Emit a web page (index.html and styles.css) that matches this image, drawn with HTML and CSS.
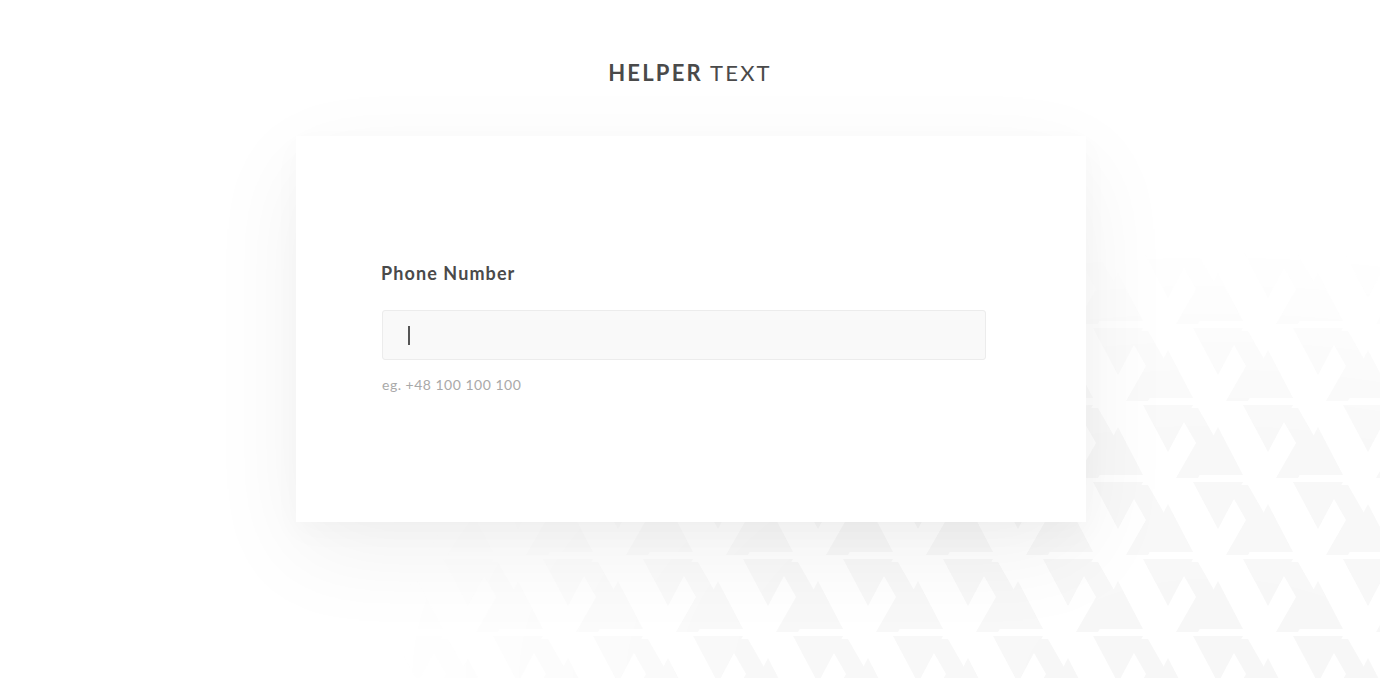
FILE: index.html
```html
<!DOCTYPE html>
<html lang="en">
<head>
<meta charset="utf-8">
<title>Helper text</title>
<link rel="stylesheet" href="styles.css">
</head>
<body>
<div class="bg-pattern"></div>
<main class="page">
  <h1 class="title"><strong>HELPER</strong> TEXT</h1>
  <section class="card">
    <div class="field">
      <label class="label">Phone Number</label>
      <div class="input"><span class="caret"></span></div>
      <p class="helper">eg. +48 100 100 100</p>
    </div>
  </section>
</main>
</body>
</html>
```

FILE: styles.css
```css
html, body {
  margin: 0;
  padding: 0;
  height: 100%;
  background: #ffffff;
  font-family: Lato, "Open Sans", "Liberation Sans", sans-serif;
  overflow: hidden;
}

.bg-pattern {
  position: absolute;
  inset: 0;
  z-index: 0;
  background-image: url("data:image/svg+xml;utf8,<svg xmlns='http://www.w3.org/2000/svg' width='100' height='154'><g fill='%23f7f7f7'><polygon points='50,2 75,50 25,50'/><polygon points='25,57 75,57 50,104'/><polygon points='0,79 25,127 -25,127'/><polygon points='100,79 125,127 75,127'/><polygon points='-25,134 25,134 0,181'/><polygon points='75,134 125,134 100,181'/><polygon points='-25,-20 25,-20 0,27'/><polygon points='75,-20 125,-20 100,27'/><polygon points='58,60 80,60 100,95 80,130 58,130 78,95'/><polygon points='8,-17 30,-17 50,18 30,53 8,53 28,18'/><polygon points='8,137 30,137 50,172 30,207 8,207 28,172'/></g></svg>");
  background-position: 18px 40px;
  -webkit-mask-image: radial-gradient(ellipse 75% 80% at 88% 100%, #000 0%, rgba(0,0,0,0.85) 45%, transparent 80%);
  mask-image: radial-gradient(ellipse 75% 80% at 88% 100%, #000 0%, rgba(0,0,0,0.85) 45%, transparent 80%);
}

.page {
  position: relative;
  z-index: 1;
  display: flex;
  flex-direction: column;
  align-items: center;
  padding-top: 60px;
}

.title {
  margin: 0 0 50px 0;
  font-size: 22px;
  line-height: 26px;
  font-weight: 400;
  color: #4a4a4a;
  letter-spacing: 2.2px;
  text-indent: 0;
}

.title strong {
  font-weight: 700;
}

.card {
  width: 790px;
  height: 386px;
  background: #ffffff;
  box-shadow: 0 30px 90px rgba(0, 0, 0, 0.06), 0 10px 30px rgba(0, 0, 0, 0.025);
  display: flex;
  flex-direction: column;
  justify-content: center;
  box-sizing: border-box;
  padding: 0 100px 3px 85px;
  margin-left: 2px;
}

.field {
  display: flex;
  flex-direction: column;
}

.label {
  font-size: 18px;
  font-weight: 700;
  color: #4a4a4a;
  line-height: 22px;
  letter-spacing: 1.1px;
  margin: 0 0 26px 0;
}

.input {
  height: 50px;
  margin-left: 1px;
  box-sizing: border-box;
  background: #f9f9f9;
  border: 1px solid #ececec;
  border-radius: 3px;
  display: flex;
  align-items: center;
  padding-left: 25px;
}

.caret {
  display: block;
  width: 2px;
  height: 19px;
  background: #555555;
}

.helper {
  margin: 17px 0 0 1px;
  font-size: 14px;
  line-height: 16px;
  color: #a9a9a9;
  letter-spacing: 0.5px;
}
```
